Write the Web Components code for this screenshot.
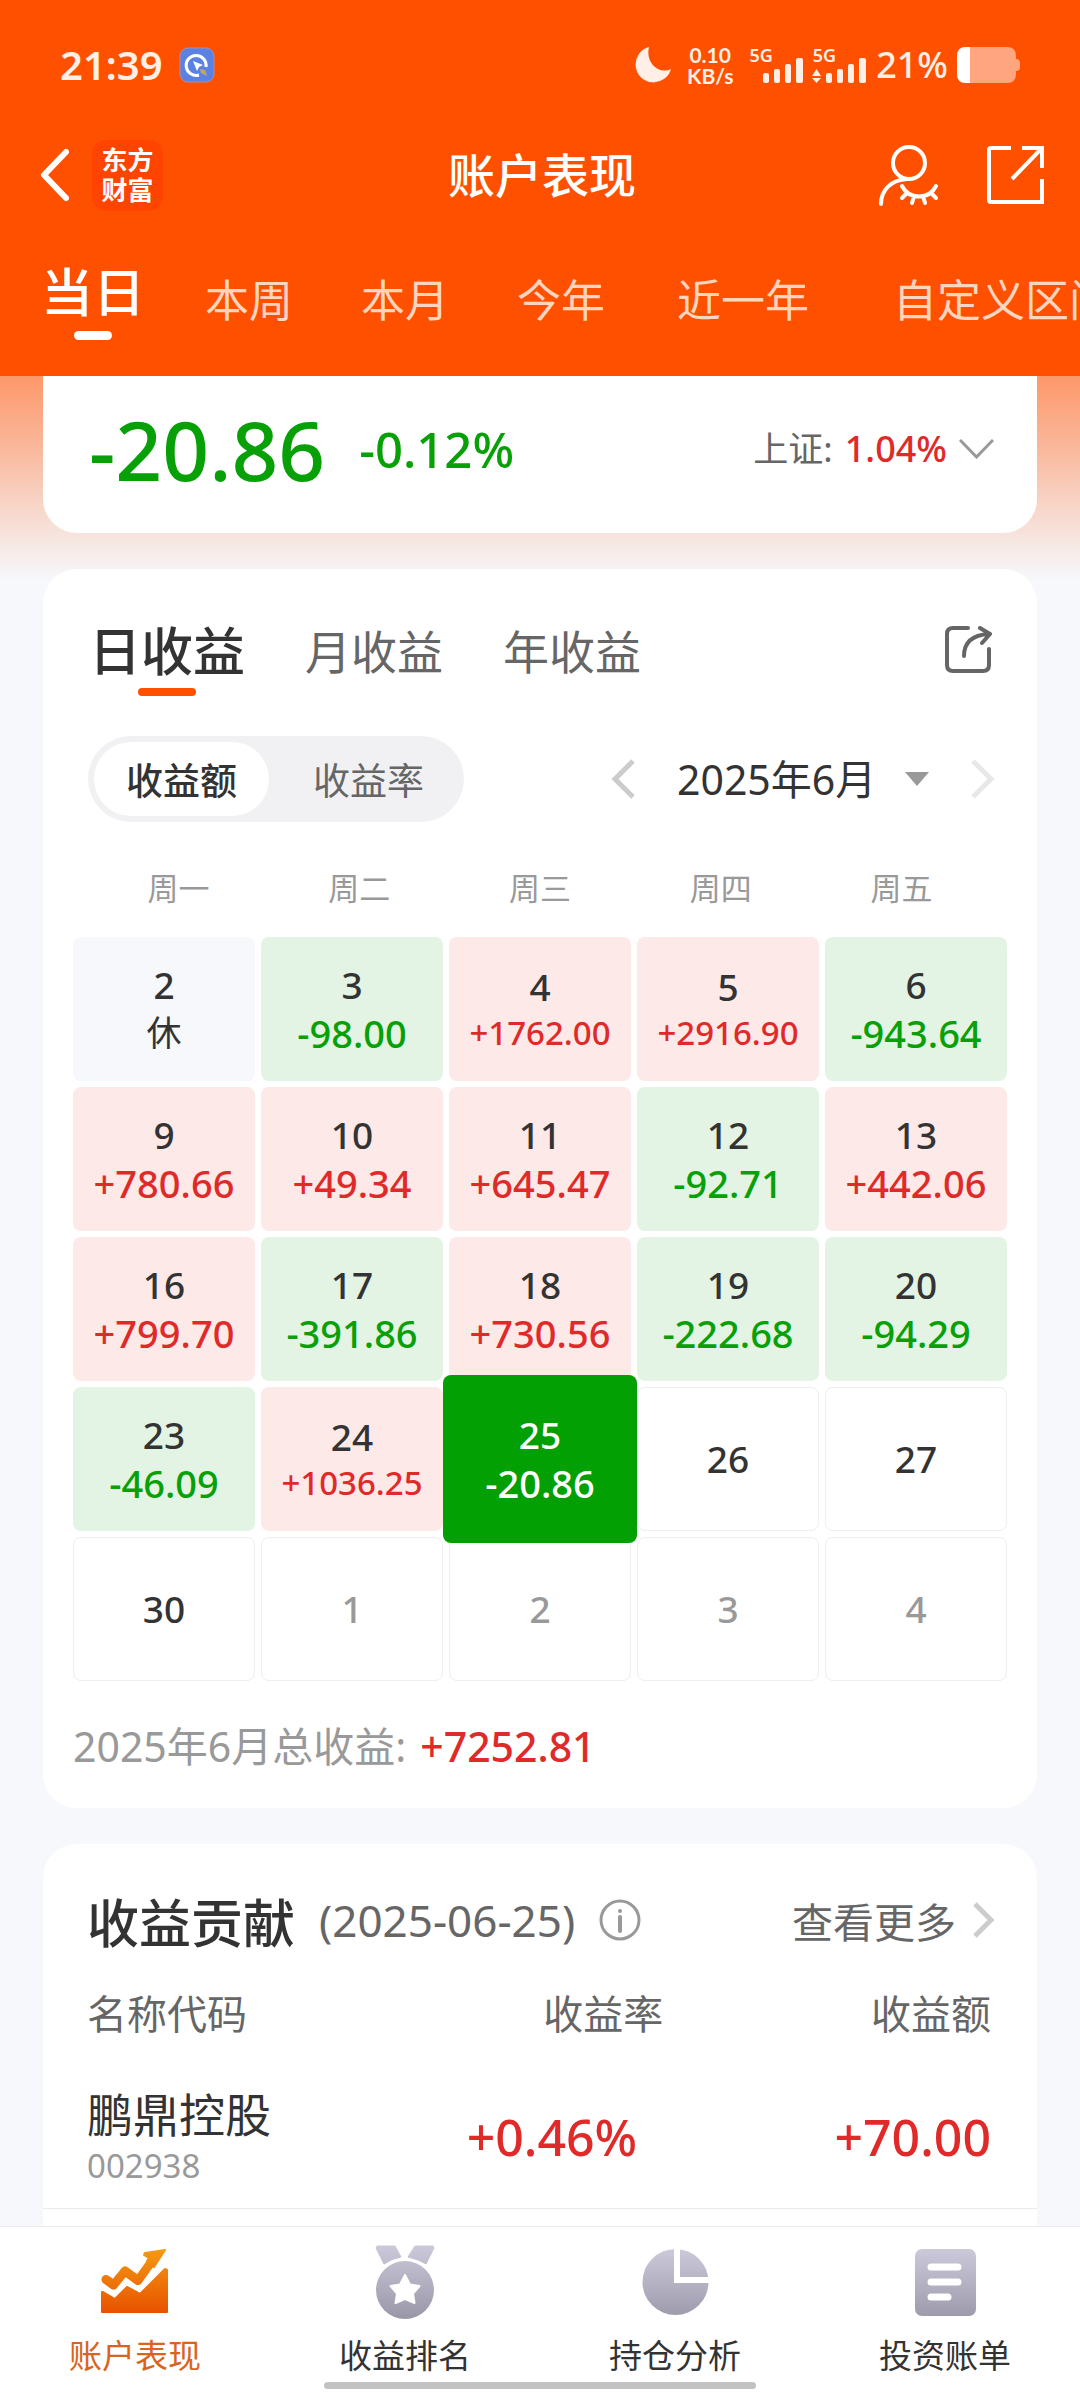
<!DOCTYPE html>
<html lang="zh-CN">
<head>
<meta charset="utf-8">
<meta name="viewport" content="width=device-width, initial-scale=1">
<title>账户表现</title>
<style>
html {
  --brand: #ff5000;
  --up: #e02a2a;
  --down: #07a007;
  --ink: #333;
  --ink-2: #666;
  --ink-3: #999;
  --page: #f6f8fb;
}

body {
  margin: 0;
  background: var(--page);
  color: var(--ink);
  font-family: "Noto Sans", "Noto Sans CJK SC", sans-serif;
}
</style>
</head>
<body>
<account-app>
  <page-header slot="header" heading="账户表现">
    <range-tab active>当日</range-tab>
    <range-tab>本周</range-tab>
    <range-tab>本月</range-tab>
    <range-tab>今年</range-tab>
    <range-tab>近一年</range-tab>
    <range-tab>自定义区间</range-tab>
  </page-header>

  <profit-summary amount="-20.86" rate="-0.12%" index-name="上证:" index-rate="1.04%"></profit-summary>
  <profit-calendar></profit-calendar>
  <profit-contribution date="2025-06-25"></profit-contribution>

  <tab-bar slot="footer">
    <tab-item icon="chart" label="账户表现" active></tab-item>
    <tab-item icon="medal" label="收益排名"></tab-item>
    <tab-item icon="pie" label="持仓分析"></tab-item>
    <tab-item icon="bill" label="投资账单"></tab-item>
  </tab-bar>
</account-app>

<script>
  const reset = `
:host, * {
  box-sizing: border-box;
}

button, select {
  margin: 0;
  padding: 0;
  border: 0;
  background: none;
  color: inherit;
  font: inherit;
  cursor: pointer;
}

a {
  color: inherit;
  text-decoration: none;
}

svg {
  display: block;
  flex: none;
}
`;

  class BaseElement extends HTMLElement {
    constructor() {
      super();
      this.attachShadow({ mode: 'open' });
    }

    render(html) {
      const template = document.createElement('template');
      template.innerHTML = `<style>${reset}</style>${html}`;
      this.shadowRoot.replaceChildren(template.content.cloneNode(true));
    }

    attr(name) {
      return this.getAttribute(name) || '';
    }
  }

  // Page shell: header, content on the fading brand colour, bottom bar
  class AccountApp extends BaseElement {
    connectedCallback() {
      this.render(`
<style>
:host {
  display: flex;
  flex-direction: column;
  min-height: 100vh;
  overflow: hidden;
}

main {
  flex: 1;
  display: flex;
  flex-direction: column;
  gap: 36px;
  padding: 0 43px;
  background: linear-gradient(#fd986a, #f9b79a 70px, #f6e3dc 157px, #f6f8fb 204px);
}
</style>
<slot name="header"></slot>
<main><slot></slot></main>
<slot name="footer"></slot>
      `);
    }
  }
  customElements.define('account-app', AccountApp);

  class StatusBar extends BaseElement {
    connectedCallback() {
      this.render(`
<style>
:host {
  display: flex;
  align-items: center;
  height: 130px;
  padding: 0 60px;
  color: #ffefe6;
  font-weight: 500;
}

.time {
  font-size: 40px;
  font-weight: 600;
  line-height: 60px;
  margin-right: 16px;
}

.moon {
  margin-left: auto;
}

.speed {
  margin: 0 16px;
  font-family: Lato, sans-serif;
  font-size: 21px;
  font-weight: 700;
  line-height: 21px;
  text-align: center;
}

.speed span {
  display: block;
}

.signal {
  display: flex;
  height: 36px;
  margin-right: 10px;
  font-size: 18px;
  font-weight: 600;
  line-height: 16px;
}

.signal svg {
  margin-left: -10px;
}

.signal .data {
  margin-left: -24px;
}

.battery {
  font-size: 36px;
  line-height: 60px;
  margin-right: 9px;
}
</style>
<span class="time">21:39</span>
<svg width="36" height="36" viewBox="0 0 36 36">
  <rect x="1" y="1" width="34" height="34" rx="8" fill="#5b82e2" stroke="#a58fae"/>
  <path d="M27 20A10 10 0 1 0 20 28" fill="none" stroke="#fff" stroke-width="3"/>
  <path d="M14 14l10 4-4 2-2 4z" fill="#fff"/>
  <path d="M21 22l5 1 2 6-6-3z" fill="#c8a468"/>
</svg>
<svg class="moon" width="36" height="36" viewBox="0 0 36 36"><path d="M14 0A18 18 0 1 0 36 22C24 28 10 16 14 0Z" fill="currentColor"/></svg>
<div class="speed"><span>0.10</span><span>KB/s</span></div>
<span class="signal">5G
  <svg width="40" height="36" viewBox="0 0 40 36" fill="currentColor"><rect y="26" width="6" height="10" rx="2"/><rect x="11" y="22" width="6" height="14" rx="2"/><rect x="22" y="17" width="6" height="19" rx="2"/><rect x="33" y="11" width="7" height="25" rx="2"/></svg>
</span>
<span class="signal">5G
  <svg class="data" width="54" height="36" viewBox="0 0 54 36" fill="currentColor"><path d="M0 29l4.500-7 4.500 7zM0 31h9l-4.500 5z"/><rect x="14" y="26" width="6" height="10" rx="2"/><rect x="25" y="22" width="6" height="14" rx="2"/><rect x="36" y="17" width="6" height="19" rx="2"/><rect x="47" y="11" width="7" height="25" rx="2"/></svg>
</span>
<span class="battery">21%</span>
<svg width="63" height="36" viewBox="0 0 63 36">
  <path d="M9 0H50Q59 0 59 9V12Q63 12 63 16V20Q63 24 59 24V27Q59 36 50 36H9Q0 36 0 27V9Q0 0 9 0Z" fill="#ffa680"/>
  <path d="M13 0H9Q0 0 0 9V27Q0 36 9 36H13Z" fill="#fff"/>
</svg>
      `);
    }
  }
  customElements.define('status-bar', StatusBar);

  class PageHeader extends BaseElement {
    connectedCallback() {
      this.render(`
<style>
:host {
  display: block;
  background: var(--brand);
  color: #fff;
}

.bar {
  display: grid;
  grid-template-columns: 1fr auto 1fr;
  align-items: center;
  height: 90px;
  padding: 0 36px 0 40px;
}

.left, .right {
  display: flex;
  align-items: center;
  gap: 23px;
}

.right {
  justify-content: flex-end;
  gap: 48px;
}

.logo {
  display: grid;
  place-content: center;
  width: 71px;
  height: 71px;
  border-radius: 14px;
  background: #ff4400;
  font-size: 26px;
  font-weight: 700;
  line-height: 30px;
}

h1 {
  margin: 0;
  font-size: 47px;
  font-weight: 500;
  line-height: 90px;
}

.tabs {
  display: flex;
  align-items: flex-start;
  gap: 52px;
  height: 156px;
  padding: 42px 41px 0;
  overflow: hidden;
}
</style>
<status-bar></status-bar>
<div class="bar">
  <div class="left">
    <button aria-label="返回"><svg width="29" height="54" viewBox="0 0 29 54" fill="none" stroke="currentColor" stroke-width="6" stroke-linecap="round" stroke-linejoin="round"><path d="M26 4L4 27l22 23"/></svg></button>
    <a class="logo" href="#"><span>东方</span><span>财富</span></a>
  </div>
  <h1></h1>
  <div class="right">
    <button aria-label="隐藏账户"><svg width="61" height="61" viewBox="0 0 61 61" fill="none" stroke="currentColor" stroke-width="4" stroke-linecap="round"><circle cx="31" cy="18" r="16"/><path d="M29 34C13 35 3 45 3 59M24 41C31 55 51 55 58 41M29 48l-5 5M36 51l-2 7M45 51l2 7M53 48l5 5"/></svg></button>
    <button aria-label="分享"><svg width="57" height="58" viewBox="0 0 57 58" fill="none" stroke="currentColor" stroke-width="4"><path d="M24 2H4Q2 2 2 4V54Q2 56 4 56H55V33M35 2H55V22M55 2L25 33"/></svg></button>
  </div>
</div>
<nav class="tabs"><slot></slot></nav>
      `);
      this.shadowRoot.querySelector('h1').textContent = this.attr('heading');
    }
  }
  customElements.define('page-header', PageHeader);

  class RangeTab extends BaseElement {
    connectedCallback() {
      // every tab is as wide as its label at the active size
      const width = this.textContent.trim().length * 52;
      this.render(`
<style>
:host {
  flex: none;
  width: ${width}px;
}

button {
  display: flex;
  flex-direction: column;
  align-items: center;
  width: 100%;
  padding-top: 8px;
  color: #ffd5c0;
  font-size: 44px;
  line-height: 60px;
  white-space: nowrap;
}

:host([active]) button {
  padding-top: 0;
  color: #fff;
  font-size: 52px;
  font-weight: 500;
}

:host([active]) button::after {
  content: "";
  width: 38px;
  height: 9px;
  margin-top: 9px;
  border-radius: 5px;
  background: #fff;
}
</style>
<button><slot></slot></button>
      `);
    }
  }
  customElements.define('range-tab', RangeTab);

  class ProfitSummary extends BaseElement {
    connectedCallback() {
      this.render(`
<style>
:host {
  display: flex;
  align-items: center;
  height: 157px;
  padding: 0 43px 12px 46px;
  border-radius: 0 0 34px 34px;
  background: #fff;
}

.amount, .rate {
  color: var(--down);
  font-size: 82px;
  font-weight: 500;
  line-height: 100px;
}

.rate {
  margin-left: 34px;
  font-size: 49px;
}

button {
  display: flex;
  align-items: center;
  gap: 12px;
  margin-left: auto;
  color: var(--ink-2);
  font-size: 35px;
  line-height: 60px;
}

.index {
  color: var(--up);
  font-size: 36px;
  font-weight: 500;
}
</style>
<span class="amount">${this.attr('amount')}</span>
<span class="rate">${this.attr('rate')}</span>
<button>
  <span>${this.attr('index-name')}</span>
  <span class="index">${this.attr('index-rate')}</span>
  <svg width="35" height="20" viewBox="0 0 35 20" fill="none" stroke="#999" stroke-width="3"><path d="M1 1l16.500 17L34 1"/></svg>
</button>
      `);
    }
  }
  customElements.define('profit-summary', ProfitSummary);

  class DayCell extends BaseElement {
    connectedCallback() {
      const value = this.attr('value');
      this.render(`
<style>
:host {
  display: block;
  height: 144px;
}

button {
  display: flex;
  flex-direction: column;
  align-items: center;
  justify-content: center;
  width: 100%;
  height: 100%;
  border: 1px solid #eee;
  border-radius: 8px;
  font-size: 37px;
  font-weight: 500;
  line-height: 48px;
}

.value {
  font-size: 38px;
}

.value.long {
  font-size: 33px;
  line-height: 44px;
}

:host([kind="rest"]) button {
  border: 0;
  background: #f6f8fb;
}

:host([kind="rest"]) .value {
  font-size: 35px;
  font-weight: 400;
}

:host([kind="up"]) button {
  border: 0;
  background: #fde9e8;
}

:host([kind="up"]) .value {
  color: var(--up);
}

:host([kind="down"]) button {
  border: 0;
  background: #e3f4e4;
}

:host([kind="down"]) .value {
  color: var(--down);
}

:host([kind="other"]) button {
  color: var(--ink-3);
}

:host([selected]) {
  z-index: 1;
  height: 168px;
  margin: -12px -6px;
}

:host([selected]) button {
  background: #02a002;
  color: #fff;
}

:host([selected]) .value {
  color: #fff;
}
</style>
<button>
  <span>${this.attr('day')}</span>
  ${value ? `<span class="value ${value.length > 7 ? 'long' : ''}">${value}</span>` : ''}
</button>
      `);
    }
  }
  customElements.define('day-cell', DayCell);

  const days = [
    ['2', '休'], ['3', '-98.00'], ['4', '+1762.00'], ['5', '+2916.90'], ['6', '-943.64'],
    ['9', '+780.66'], ['10', '+49.34'], ['11', '+645.47'], ['12', '-92.71'], ['13', '+442.06'],
    ['16', '+799.70'], ['17', '-391.86'], ['18', '+730.56'], ['19', '-222.68'], ['20', '-94.29'],
    ['23', '-46.09'], ['24', '+1036.25'], ['25', '-20.86', true], ['26'], ['27'],
    ['30'], ['1', '', false, true], ['2', '', false, true], ['3', '', false, true], ['4', '', false, true],
  ];

  class ProfitCalendar extends BaseElement {
    cell([day, value = '', selected, other]) {
      let kind = '';
      if (other) kind = 'other';
      else if (value === '休') kind = 'rest';
      else if (value) kind = value[0] === '+' ? 'up' : 'down';
      return `<day-cell day="${day}" value="${value}" kind="${kind}" ${selected ? 'selected' : ''}></day-cell>`;
    }

    connectedCallback() {
      this.render(`
<style>
:host {
  display: block;
  padding: 45px 30px 33px;
  border-radius: 34px;
  background: #fff;
}

.tabs {
  display: flex;
  align-items: flex-start;
  gap: 60px;
  padding: 0 15px 0 16px;
}

.tabs button {
  color: var(--ink-2);
  font-size: 46px;
  line-height: 74px;
}

.tabs .active {
  display: flex;
  flex-direction: column;
  align-items: center;
  color: var(--ink);
  font-size: 52px;
  font-weight: 500;
}

.active::after {
  content: "";
  width: 58px;
  height: 8px;
  border-radius: 4px;
  background: var(--brand);
}

.tabs .share {
  margin-left: auto;
  padding-top: 12px;
}

.tools {
  display: flex;
  align-items: center;
  justify-content: space-between;
  margin-top: 40px;
  padding: 0 12px 0 15px;
}

.switch {
  display: flex;
  padding: 6px;
  border-radius: 43px;
  background: #f1f1f4;
}

.switch button {
  height: 74px;
  padding: 0 32px;
  border-radius: 37px;
  color: var(--ink-2);
  font-size: 37px;
}

.switch button + button {
  padding: 0 34px 0 44px;
}

.switch .on {
  background: #fff;
  color: var(--ink);
  font-weight: 500;
}

.month {
  display: flex;
  align-items: center;
}

select {
  appearance: none;
  margin: 0 0 0 42px;
  padding-right: 52px;
  font-size: 41px;
  line-height: 60px;
}

.caret {
  margin: 0 42px 0 -24px;
  pointer-events: none;
}

.weekdays {
  display: grid;
  grid-template-columns: repeat(5, 1fr);
  margin: 44px 0 27px;
  padding: 0 15px;
  color: var(--ink-3);
  font-size: 31px;
  line-height: 44px;
  text-align: center;
}

.grid {
  display: grid;
  grid-template-columns: repeat(5, 1fr);
  gap: 6px;
}

p {
  display: flex;
  gap: 14px;
  margin: 36px 0 0;
  color: var(--ink-3);
  font-size: 41px;
  line-height: 58px;
}

b {
  color: var(--up);
  font-weight: 500;
}
</style>
<div class="tabs">
  <button class="active">日收益</button>
  <button>月收益</button>
  <button>年收益</button>
  <button class="share" aria-label="分享"><svg width="47" height="47" viewBox="0 0 47 47" fill="none" stroke="#666" stroke-width="4" stroke-linecap="round" stroke-linejoin="round"><path d="M23 2H8Q2 2 2 8V39Q2 45 8 45H38Q44 45 44 39V23M19 30C19 17 26 9 44 8M35 2L45 8L37 17"/></svg></button>
</div>
<div class="tools">
  <div class="switch">
    <button class="on" aria-pressed="true">收益额</button><button aria-pressed="false">收益率</button>
  </div>
  <div class="month">
    <button aria-label="上个月"><svg width="24" height="40" viewBox="0 0 24 40" fill="none" stroke="#ccc" stroke-width="5"><path d="M22 2L4 20l18 18"/></svg></button>
    <select aria-label="月份"><option>2025年6月</option></select>
    <svg class="caret" width="24" height="14" viewBox="0 0 24 14"><path d="M0 0h24L12 14z" fill="#999"/></svg>
    <button aria-label="下个月"><svg width="24" height="40" viewBox="0 0 24 40" fill="none" stroke="#e8e8e8" stroke-width="5"><path d="M2 2l18 18L2 38"/></svg></button>
  </div>
</div>
<div class="weekdays"><span>周一</span><span>周二</span><span>周三</span><span>周四</span><span>周五</span></div>
<div class="grid">${days.map(this.cell).join('')}</div>
<p><span>2025年6月总收益:</span><b>+7252.81</b></p>
      `);
    }
  }
  customElements.define('profit-calendar', ProfitCalendar);

  class ProfitContribution extends BaseElement {
    connectedCallback() {
      this.render(`
<style>
:host {
  display: block;
  flex: 1;
  padding-top: 38px;
  border-radius: 34px 34px 0 0;
  background: #fff;
}

header {
  display: flex;
  align-items: center;
  height: 76px;
  padding: 0 42px 0 44px;
  color: var(--ink-2);
  font-size: 41px;
}

h2 {
  margin: 0 24px 0 0;
  color: var(--ink);
  font-size: 52px;
  font-weight: 500;
}

time {
  margin-right: 24px;
  font-size: 44px;
}

a {
  display: flex;
  align-items: center;
  gap: 17px;
  margin-left: auto;
}

table {
  width: 100%;
  border-collapse: collapse;
  table-layout: fixed;
}

th, td {
  padding: 0;
  text-align: right;
}

th {
  height: 108px;
  padding-right: 6px;
  color: var(--ink-2);
  font-size: 40px;
  font-weight: 400;
}

th:first-child, td:first-child {
  width: 38%;
  padding-left: 44px;
  text-align: left;
}

th:last-child, td:last-child {
  padding-right: 46px;
}

th:last-child {
  width: 37%;
}

td {
  padding: 19px 0;
  border-bottom: 1px solid #eaeaea;
  color: var(--up);
  font-size: 50px;
  font-weight: 500;
  line-height: 60px;
}

.rate {
  padding-right: 32px;
}

.name, .code {
  display: block;
  color: var(--ink);
  font-size: 46px;
  font-weight: 400;
  line-height: 58px;
}

.code {
  color: var(--ink-3);
  font-size: 33px;
  line-height: 46px;
}
</style>
<header>
  <h2>收益贡献</h2>
  <time>(${this.attr('date')})</time>
  <button aria-label="说明"><svg width="42" height="42" viewBox="0 0 42 42" fill="none" stroke="#999" stroke-width="3" stroke-linecap="round"><circle cx="21" cy="21" r="19"/><path d="M21 18V32" stroke-width="4"/><circle cx="21" cy="12" r="2" fill="#999" stroke="none"/></svg></button>
  <a href="#">查看更多<svg width="22" height="36" viewBox="0 0 22 36" fill="none" stroke="#ccc" stroke-width="5"><path d="M2 2l16 16L2 34"/></svg></a>
</header>
<table>
  <thead><tr><th>名称代码</th><th>收益率</th><th>收益额</th></tr></thead>
  <tbody>
    <tr>
      <td><span class="name">鹏鼎控股</span><span class="code">002938</span></td>
      <td class="rate">+0.46%</td>
      <td>+70.00</td>
    </tr>
  </tbody>
</table>
      `);
    }
  }
  customElements.define('profit-contribution', ProfitContribution);

  class TabBar extends BaseElement {
    connectedCallback() {
      this.render(`
<style>
:host {
  position: relative;
  display: block;
  border-top: 1px solid #eaeaea;
  background: #fff;
}

nav {
  display: grid;
  grid-template-columns: repeat(4, 1fr);
  height: 165px;
}

/* system home indicator */
i {
  position: absolute;
  bottom: 3px;
  left: 30%;
  width: 40%;
  height: 7px;
  border-radius: 4px;
  background: #c2c2c2;
}
</style>
<nav><slot></slot></nav>
<i></i>
      `);
    }
  }
  customElements.define('tab-bar', TabBar);

  const grey = `<defs><linearGradient id="g" x1="0" y1="0" x2="0" y2="74" gradientUnits="userSpaceOnUse"><stop stop-color="#cbc9da"/><stop offset="1" stop-color="#9896a7"/></linearGradient></defs>`;

  const icons = {
    chart: `<svg width="68" height="74" viewBox="0 -4 68 74">
      <defs><linearGradient id="g" x1="0" y1="0" x2="0" y2="64" gradientUnits="userSpaceOnUse"><stop stop-color="#f59a12"/><stop offset="1" stop-color="#e85200"/></linearGradient></defs>
      <path d="M5 30.500L12.500 36L24 22L37 31.500L51 12" fill="none" stroke="url(#g)" stroke-width="9" stroke-linecap="round" stroke-linejoin="round"/>
      <path d="M44 4L64 1L53 18L46 12L48 9L43 6Z" fill="url(#g)" stroke="url(#g)" stroke-linejoin="round" stroke-width="2"/>
      <path d="M1 43L2 43L14 50L26 38L39 45L64 20L66 21V63H1Z" fill="url(#g)" stroke="url(#g)" stroke-linejoin="round" stroke-width="2"/>
    </svg>`,
    medal: `<svg width="60" height="74" viewBox="0 0 60 74">${grey}
      <path d="M2 1H20L26 12Q16 14 9 19L1 3ZM58 1H40L33 12Q43 14 51 19L59 3Z" fill="url(#g)" stroke="url(#g)" stroke-linejoin="round"/>
      <circle cx="30" cy="45" r="29" fill="url(#g)"/>
      <path d="M30 30L35 39.500L44.500 41L38 48.500L39.500 58L30 54L20.500 58L22 48.500L15.500 41L25 39.500Z" fill="#fff" stroke="#fff" stroke-width="2" stroke-linejoin="round"/>
    </svg>`,
    pie: `<svg width="67" height="74" viewBox="0 -4 67 74">${grey}
      <circle cx="33.500" cy="33" r="33" fill="url(#g)"/>
      <path d="M35 -2V31H68" fill="none" stroke="#fff" stroke-width="6"/>
    </svg>`,
    bill: `<svg width="61" height="74" viewBox="0 -4 61 74">${grey}
      <rect width="61" height="67" rx="7" fill="url(#g)"/>
      <path d="M16 18H43M16 33H43M16 48H33" stroke="#fff" stroke-width="7" stroke-linecap="round"/>
    </svg>`,
  };

  class TabItem extends BaseElement {
    connectedCallback() {
      this.render(`
<style>
:host {
  display: block;
}

a {
  display: flex;
  flex-direction: column;
  align-items: center;
  padding-top: 18px;
  color: var(--ink);
  font-size: 33px;
  line-height: 48px;
}

svg {
  margin-bottom: 13px;
}

:host([active]) a {
  color: #d9641f;
}
</style>
<a href="#">${icons[this.attr('icon')]}${this.attr('label')}</a>
      `);
    }
  }
  customElements.define('tab-item', TabItem);
</script>
</body>
</html>
